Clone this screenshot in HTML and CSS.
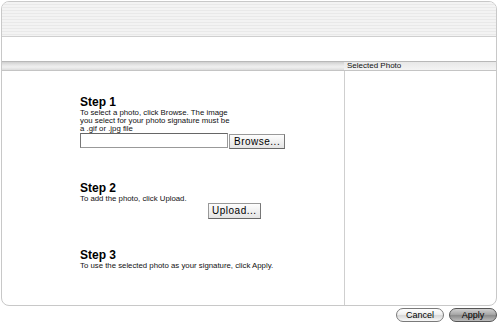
FILE: index.html
```html
<!DOCTYPE html>
<html>
<head>
<meta charset="utf-8">
<link rel="stylesheet" href="styles.css">
</head>
<body>
<div class="page">
  <div class="panel">
    <div class="header"></div>
    <div class="band"></div>
    <div class="bar">
      <div class="bar-left"></div>
      <div class="bar-right">Selected Photo</div>
    </div>
    <div class="main">
      <div class="steps">
        <div class="step step1">
          <h2 class="step-title">Step 1</h2>
          <p class="step-text">To select a photo, click Browse. The image<br>you select for your photo signature must be<br>a .gif or .jpg file</p>
          <div class="file-row">
            <div class="file-input"></div>
            <button class="btn">Browse...</button>
          </div>
        </div>
        <div class="step step2">
          <h2 class="step-title">Step 2</h2>
          <p class="step-text">To add the photo, click Upload.</p>
          <div class="upload-row">
            <button class="btn btn-upload">Upload...</button>
          </div>
        </div>
        <div class="step step3">
          <h2 class="step-title">Step 3</h2>
          <p class="step-text">To use the selected photo as your signature, click Apply.</p>
        </div>
      </div>
      <div class="photo"></div>
    </div>
  </div>
  <div class="actions">
    <button class="pill">Cancel</button>
    <button class="pill pill-default">Apply</button>
  </div>
</div>
</body>
</html>
```
FILE: styles.css
```css
* { box-sizing: border-box; }
html, body { margin: 0; padding: 0; background: #fff; }
body { font-family: "Liberation Sans", Arial, sans-serif; color: #000; }
.page { width: 500px; height: 323px; padding: 1px 3px 0 1px; }
.panel {
  height: 305px;
  border: 1px solid #c8c8c8;
  border-radius: 8px;
  overflow: hidden;
  display: flex;
  flex-direction: column;
}
.header {
  height: 35px;
  flex: none;
  border-bottom: 1px solid #cfcfcf;
  background: repeating-linear-gradient(to bottom, #f3f3f3 0, #f3f3f3 2px, #e9e9e9 2px, #e9e9e9 3px);
}
.band { height: 24px; flex: none; background: #fff; }
.bar {
  height: 10px;
  flex: none;
  display: flex;
  border-top: 1px solid #b8b8b8;
  border-bottom: 1px solid #c4c4c4;
  background: linear-gradient(to bottom, #d0d0d0 0, #e6e6e6 3px, #f0f0f0 5px, #dcdcdc 8px);
}
.bar-left { width: 342px; flex: none; }
.bar-right {
  flex: 1;
  font-size: 8px;
  line-height: 8px;
  padding-left: 3px;
  color: #111;
  background: linear-gradient(to bottom, #e8e8e8, #f4f4f4);
}
.main { flex: 1; display: flex; }
.steps { width: 343px; flex: none; border-right: 1px solid #cfcfcf; padding: 25px 0 0 78px; }
.photo { flex: 1; }
.step-title { margin: 0; font-size: 12px; line-height: 13px; font-weight: bold; }
.step-text { margin: 0; font-size: 7.8px; line-height: 8px; color: #111; }
.step2 { margin-top: 33px; }
.step3 { margin-top: 30px; }
.file-row { display: flex; align-items: flex-start; margin-top: 0; }
.file-input {
  width: 148px; height: 15px;
  border: 1px solid #999;
  border-top-color: #666;
  border-left-color: #777;
  background: #fff;
}
.btn {
  font-family: "Liberation Sans", Arial, sans-serif;
  font-size: 10px;
  letter-spacing: 0.5px;
  height: 15px;
  padding: 0 4px;
  margin: 1px 0 0 1px;
  border: 1px solid #999;
  border-right-color: #777;
  border-bottom-color: #666;
  background: linear-gradient(to bottom, #fdfdfd, #e4e4e4);
  color: #000;
  line-height: 13px;
}
.upload-row { padding-left: 127px; margin-top: -3px; }
.btn-upload { height: 16px; padding: 0 3px; }
.actions { display: flex; justify-content: flex-end; gap: 5px; padding: 2px 0 0 0; }
.pill {
  font-family: "Liberation Sans", Arial, sans-serif;
  font-size: 9px;
  height: 14px;
  width: 48px;
  padding: 0;
  border-radius: 7px;
  border: 1px solid #7a7a7a;
  background: linear-gradient(to bottom, #ffffff 0, #f0f0f0 45%, #d8d8d8 55%, #f8f8f8 100%);
  color: #000;
  line-height: 12px;
}
.pill-default {
  background: linear-gradient(to bottom, #d0d0d0 0, #a8a8a8 45%, #8c8c8c 55%, #bdbdbd 100%);
  border-color: #555;
}
```
